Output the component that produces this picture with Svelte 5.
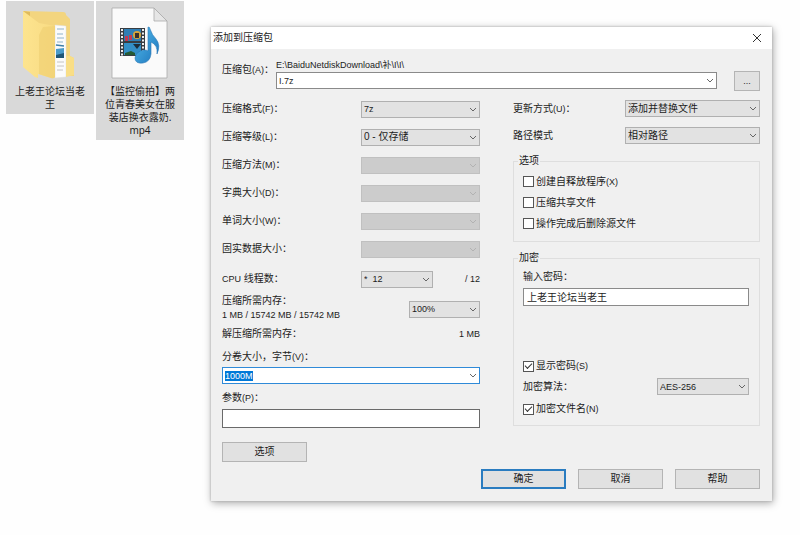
<script>
    import { onMount } from 'svelte';

    let archiveName = 'I.7z';
    let volumeSize = '1000M';
    let params = '';
    let password = '上老王论坛当老王';
    let volumeInput;

    // Left column, disabled ones have no value for the store-only level
    const settings = [
        { id: 'format', label: '压缩格式', key: '(F)', value: '7z', small: true },
        { id: 'level', label: '压缩等级', key: '(L)', value: '0 - 仅存储' },
        { id: 'method', label: '压缩方法', key: '(M)', value: '', disabled: true },
        { id: 'dict', label: '字典大小', key: '(D)', value: '', disabled: true },
        { id: 'word', label: '单词大小', key: '(W)', value: '', disabled: true },
        { id: 'solid', label: '固实数据大小', key: '', value: '', disabled: true }
    ];

    let options = [
        { label: '创建自释放程序', key: '(X)', checked: false },
        { label: '压缩共享文件', key: '', checked: false },
        { label: '操作完成后删除源文件', key: '', checked: false }
    ];

    let showPassword = true;
    let encryptNames = true;

    onMount(() => {
        volumeInput.focus();
        volumeInput.select();
    });
</script>

{#snippet chevron()}
    <svg class="chevron" viewBox="0 0 8 5" aria-hidden="true">
        <path d="M1 1 L4 4 L7 1" />
    </svg>
{/snippet}

{#snippet combo(id, value, disabled, small)}
    <div class="combo {id}">
        <select {id} {disabled} class:small>
            <option>{value}</option>
        </select>
        {@render chevron()}
    </div>
{/snippet}

<div class="desktop">
    <div class="files">
        <div class="file">
            <svg class="icon" viewBox="0 0 60 74" aria-hidden="true">
                <defs>
                    <linearGradient id="flap" x1="0" x2="1">
                        <stop offset="0" stop-color="#fde48f" />
                        <stop offset="1" stop-color="#f8db83" />
                    </linearGradient>
                </defs>
                <path d="M3 4 L43 5 Q46 5 46 8 L50 12 V49 L54 51 V69 H34 Z" fill="#f3d57f" />
                <path d="M35 18 L46 19 V70 L35 71 Z" fill="#fbfbfb" stroke="#ddd" stroke-width=".5" />
                <path d="M37 22 H44 M37 27 H43 M37 31 H44 M37 35 H43" stroke="#8fb2cb" />
                <path d="M36 38 L44 39" stroke="#3e7ea8" stroke-width="1.5" />
                <path d="M36 42 L44 41 V51 L36 51 Z" fill="#4b9bca" />
                <path d="M36 48 L44 46 V51 L36 51 Z" fill="#205676" />
                <path d="M37 55 H44 M37 59 H44 M37 63 H43" stroke="#c4c4c4" />
                <path d="M3 4 L19 16 L35 19 V70 Q34 72 31 71 L18 67 V71 L15 70 L3 60 Z" fill="url(#flap)" />
                <path d="M19 28 L23 20 L35 19 V70 Q34 72 31 71 L19 67 Z" fill="#efcf72" opacity=".6" />
                <path d="M3 4 L10 5 L10 9 Z" fill="#dfbb5c" />
                <path d="M46 49 H50 L54 51 V68 L46 70 Z" fill="#f9de86" />
            </svg>
            <span>上老王论坛当老王</span>
        </div>
        <div class="file">
            <svg class="icon" viewBox="0 0 60 74" aria-hidden="true">
                <defs>
                    <linearGradient id="note" x1="0" x2="1" y1="0" y2="1">
                        <stop offset="0" stop-color="#56c0ef" />
                        <stop offset="1" stop-color="#1b72ba" />
                    </linearGradient>
                </defs>
                <path d="M2 1 H44 L57 14 V71 H2 Z" fill="#fafafa" stroke="#aaa" stroke-width=".8" />
                <path d="M44 1 V14 H57 Z" fill="#e6e6e6" stroke="#aaa" stroke-width=".8" />
                <path d="M10 21 H35 V49 H10 Z" fill="#383d42" />
                <path d="M14 22 H31 V34 H14 Z" fill="#2f7eb4" />
                <path d="M14 36 H31 V48 H14 Z" fill="#338fc7" />
                <path d="M12 22 V49 M33 22 V49" stroke="#eee" stroke-width="2" stroke-dasharray="2 1.5" />
                <path d="M15 29 H18 V34 H15 Z M19 28 H22 V33 H19 Z" fill="#c23a52" />
                <circle cx="27" cy="28" r="4" fill="#dba536" />
                <path d="M25 26 H29 V31 H25 Z" fill="#39312c" />
                <path d="M23 37 H31 L27 42 Z" fill="#1d2e3b" />
                <path d="M15 46 L21 44 L25 46 V48 H15 Z" fill="#245a35" />
                <path d="M38 20 Q40 20 40 22 Q42 28 46 32 Q51 38 47 47 Q48 38 41 35 L41 47 Q40 55 33 56 Q25 57 25 51 Q26 44 34 43 Q37 43 38 44 Z" fill="url(#note)" stroke="#2a77b5" stroke-width=".6" />
            </svg>
            <span>【监控偷拍】两位青春美女在服装店换衣露奶.<wbr />mp4</span>
        </div>
    </div>

    <form class="dialog" on:submit|preventDefault>
        <header>
            <h1>添加到压缩包</h1>
            <button type="button" class="close" aria-label="关闭">
                <svg viewBox="0 0 10 10"><path d="M1 1 L9 9 M9 1 L1 9" /></svg>
            </button>
        </header>

        <div class="body">
            <div class="archive">
                <label for="archive">压缩包<small>(A)</small>：</label>
                <div class="archive-field">
                    <div class="path">E:\BaiduNetdiskDownload\补\I\I\</div>
                    <div class="combo edit">
                        <input id="archive" type="text" bind:value={archiveName} />
                        {@render chevron()}
                    </div>
                </div>
                <button type="button" class="browse">...</button>
            </div>

            <div class="columns">
                <div class="left">
                    {#each settings as s}
                        <div class="row">
                            <label for={s.id}>{s.label}<small>{s.key}</small>：</label>
                            {@render combo(s.id, s.value, s.disabled, s.small)}
                        </div>
                    {/each}
                    <div class="row threads-row">
                        <label for="threads"><small>CPU</small> 线程数：</label>
                        <div class="threads-value">
                            {@render combo('threads', '*\u00a0 12', false, true)}
                            <small>/ 12</small>
                        </div>
                    </div>
                    <div class="usage">
                        <label for="memory">压缩所需内存：<small>1 MB / 15742 MB / 15742 MB</small></label>
                        {@render combo('memory', '100%', false, true)}
                    </div>
                    <div class="unpack">
                        <span>解压缩所需内存：</span>
                        <small>1 MB</small>
                    </div>
                    <label class="volume-label" for="volume">分卷大小，字节<small>(V)</small>：</label>
                    <div class="combo edit active">
                        <input id="volume" type="text" bind:value={volumeSize} bind:this={volumeInput} />
                        {@render chevron()}
                    </div>
                    <label class="params-label" for="params">参数<small>(P)</small>：</label>
                    <input id="params" class="params" type="text" bind:value={params} />
                    <button type="button" class="btn more">选项</button>
                </div>

                <div class="right">
                    <div class="row">
                        <label for="update">更新方式<small>(U)</small>：</label>
                        {@render combo('update', '添加并替换文件', false, false)}
                    </div>
                    <div class="row">
                        <label for="paths">路径模式</label>
                        {@render combo('paths', '相对路径', false, false)}
                    </div>

                    <fieldset class="options">
                        <legend>选项</legend>
                        {#each options as option}
                            <label class="check">
                                <input type="checkbox" bind:checked={option.checked} />
                                <span>{option.label}<small>{option.key}</small></span>
                            </label>
                        {/each}
                    </fieldset>

                    <fieldset class="encryption">
                        <legend>加密</legend>
                        <label for="password">输入密码：</label>
                        <input id="password" class="password" type={showPassword ? 'text' : 'password'} value={password} />
                        <label class="check">
                            <input type="checkbox" bind:checked={showPassword} />
                            <span>显示密码<small>(S)</small></span>
                        </label>
                        <div class="algorithm">
                            <label for="cipher">加密算法：</label>
                            {@render combo('cipher', 'AES-256', false, true)}
                        </div>
                        <label class="check">
                            <input type="checkbox" bind:checked={encryptNames} />
                            <span>加密文件名<small>(N)</small></span>
                        </label>
                    </fieldset>
                </div>
            </div>

            <footer>
                <button type="submit" class="btn primary">确定</button>
                <button type="button" class="btn">取消</button>
                <button type="button" class="btn">帮助</button>
            </footer>
        </div>
    </form>
</div>

<style>
    :global(body) {
        background: #fefefe;
    }

    .desktop {
        display: flex;
        align-items: flex-start;
        gap: 27px;
        padding: 1px 28px 34px 6px;
        font-family: "Liberation Sans", "Noto Sans CJK SC", sans-serif;
        font-size: 10px;
        line-height: 14px;
        color: #1c1c1c;
    }

    .desktop * {
        box-sizing: border-box;
    }

    small {
        font-size: 9px;
    }

    input,
    select,
    button {
        font: inherit;
        color: inherit;
        margin: 0;
        border-radius: 0;
        outline: none;
    }

    /* Desktop files */
    .files {
        display: flex;
        align-items: flex-start;
        gap: 2px;
        flex: none;
    }

    .file {
        display: flex;
        flex-direction: column;
        align-items: center;
        width: 88px;
        padding: 6px 7px 3px;
        background: #d9d9d9;
        font-family: "Noto Sans", "Noto Sans CJK SC", sans-serif;
        line-height: 13px;
        text-align: center;
    }

    .icon {
        width: 60px;
        height: 74px;
        margin-bottom: 4px;
    }

    .file span {
        width: 72px;
    }

    /* Dialog window */
    .dialog {
        flex: 1;
        margin-top: 26px;
        background: #f0f0f0;
        box-shadow: 0 0 2px #aaa, 1px 2px 8px rgba(0, 0, 0, 0.35);
    }

    header {
        display: flex;
        justify-content: space-between;
        align-items: center;
        height: 22px;
        padding: 0 10px 0 2px;
        background: #fff;
    }

    h1 {
        margin: 0;
        font-size: 10px;
        font-weight: normal;
    }

    .close {
        display: flex;
        padding: 0;
        border: 0;
        background: none;
    }

    .close svg {
        width: 10px;
        height: 10px;
    }

    .close path,
    .chevron path {
        fill: none;
        stroke: #333;
    }

    .body {
        padding: 9px 12px 12px 11px;
    }

    .archive {
        display: flex;
        align-items: flex-end;
    }

    .archive > label {
        align-self: flex-start;
        width: 54px;
        padding-top: 5px;
    }

    .archive-field {
        flex: 1;
        padding-bottom: 2px;
    }

    .path {
        height: 14px;
        font-size: 9px;
    }

    .browse {
        width: 26px;
        height: 20px;
        margin-left: 17px;
        padding: 0;
        border: 1px solid #b4b4b4;
        background: #e1e1e1;
        font-size: 9px;
    }

    .columns {
        display: grid;
        grid-template-columns: 258fr 247fr;
        gap: 33px;
        margin-top: 4px;
    }

    .left {
        display: flex;
        flex-direction: column;
    }

    .row {
        display: flex;
        justify-content: space-between;
        align-items: center;
        height: 28px;
    }

    .right .row {
        height: 27px;
    }

    /* Drop-downs */
    .combo {
        position: relative;
        width: 119px;
        height: 17px;
    }

    .combo select,
    .combo input {
        display: block;
        width: 100%;
        height: 100%;
        padding: 0 16px 0 2px;
        border: 1px solid #b0b0b0;
        background: #e2e2e2;
        appearance: none;
        line-height: 14px;
    }

    .combo select:disabled {
        background: #ccc;
        border-color: #c0c0c0;
        opacity: 1;
    }

    .combo select:disabled + .chevron {
        opacity: 0.25;
    }

    .combo select.small,
    .combo input {
        font-size: 9px;
    }

    .chevron {
        position: absolute;
        top: 6px;
        right: 3px;
        width: 8px;
        height: 5px;
        pointer-events: none;
    }

    .chevron path {
        stroke: #666;
    }

    .combo.edit {
        width: 100%;
    }

    .combo.edit input {
        background: #fff;
        border-color: #8a8a8a;
    }

    .combo.edit.active input {
        border-color: #2f8ad8;
    }

    .combo input::selection {
        background: #0078d7;
        color: #fff;
    }

    .threads-row {
        margin-top: 2px;
    }

    .threads-value {
        display: flex;
        justify-content: space-between;
        align-items: center;
        width: 119px;
    }

    .combo.threads {
        width: 72px;
    }

    .combo.memory {
        width: 71px;
        margin-top: 2px;
    }

    .combo.update,
    .combo.paths {
        width: 135px;
    }

    .combo.cipher {
        width: 92px;
    }

    .usage {
        display: flex;
        justify-content: space-between;
        align-items: center;
        margin-top: 1px;
    }

    .usage small {
        display: block;
    }

    .unpack {
        display: flex;
        justify-content: space-between;
        margin-top: 5px;
    }

    .volume-label {
        margin: 9px 0 3px;
    }

    .params-label {
        margin: 7px 0 4px;
    }

    .params {
        height: 19px;
        padding: 0 3px;
        border: 1px solid #6a6a6a;
        background: #fff;
    }

    .btn {
        width: 85px;
        height: 20px;
        padding: 0;
        border: 1px solid #b4b4b4;
        background: #e1e1e1;
    }

    .btn.primary {
        border: 2px solid #2a7cc0;
    }

    .more {
        margin-top: 14px;
    }

    /* Option groups */
    fieldset {
        min-width: 0;
        margin: 5px 0 0;
        padding: 3px 10px 7px 9px;
        border: 1px solid #dedede;
    }

    legend {
        margin-left: -5px;
        padding: 0 1px;
    }

    .check {
        display: flex;
        align-items: center;
        gap: 2px;
    }

    .options .check {
        height: 21px;
    }

    .check input {
        display: grid;
        place-items: center;
        width: 11px;
        height: 11px;
        border: 1px solid #555;
        background: #fff;
        appearance: none;
    }

    .check input:checked::before {
        content: "";
        width: 6px;
        height: 3px;
        border-left: 1px solid #333;
        border-bottom: 1px solid #333;
        transform: translateY(-1px) rotate(-45deg);
    }

    .encryption {
        margin-top: 9px;
        padding: 5px 10px 9px 9px;
    }

    .encryption > label {
        display: flex;
    }

    .password {
        display: block;
        width: 100%;
        height: 18px;
        margin: 4px 0 53px;
        padding: 0 3px 2px;
        border: 1px solid #8a8a8a;
        background: #fff;
    }

    .algorithm {
        display: flex;
        justify-content: space-between;
        align-items: center;
        margin: 5px 0 7px;
    }

    footer {
        display: flex;
        justify-content: flex-end;
        gap: 12px;
        margin-top: 7px;
    }
</style>
